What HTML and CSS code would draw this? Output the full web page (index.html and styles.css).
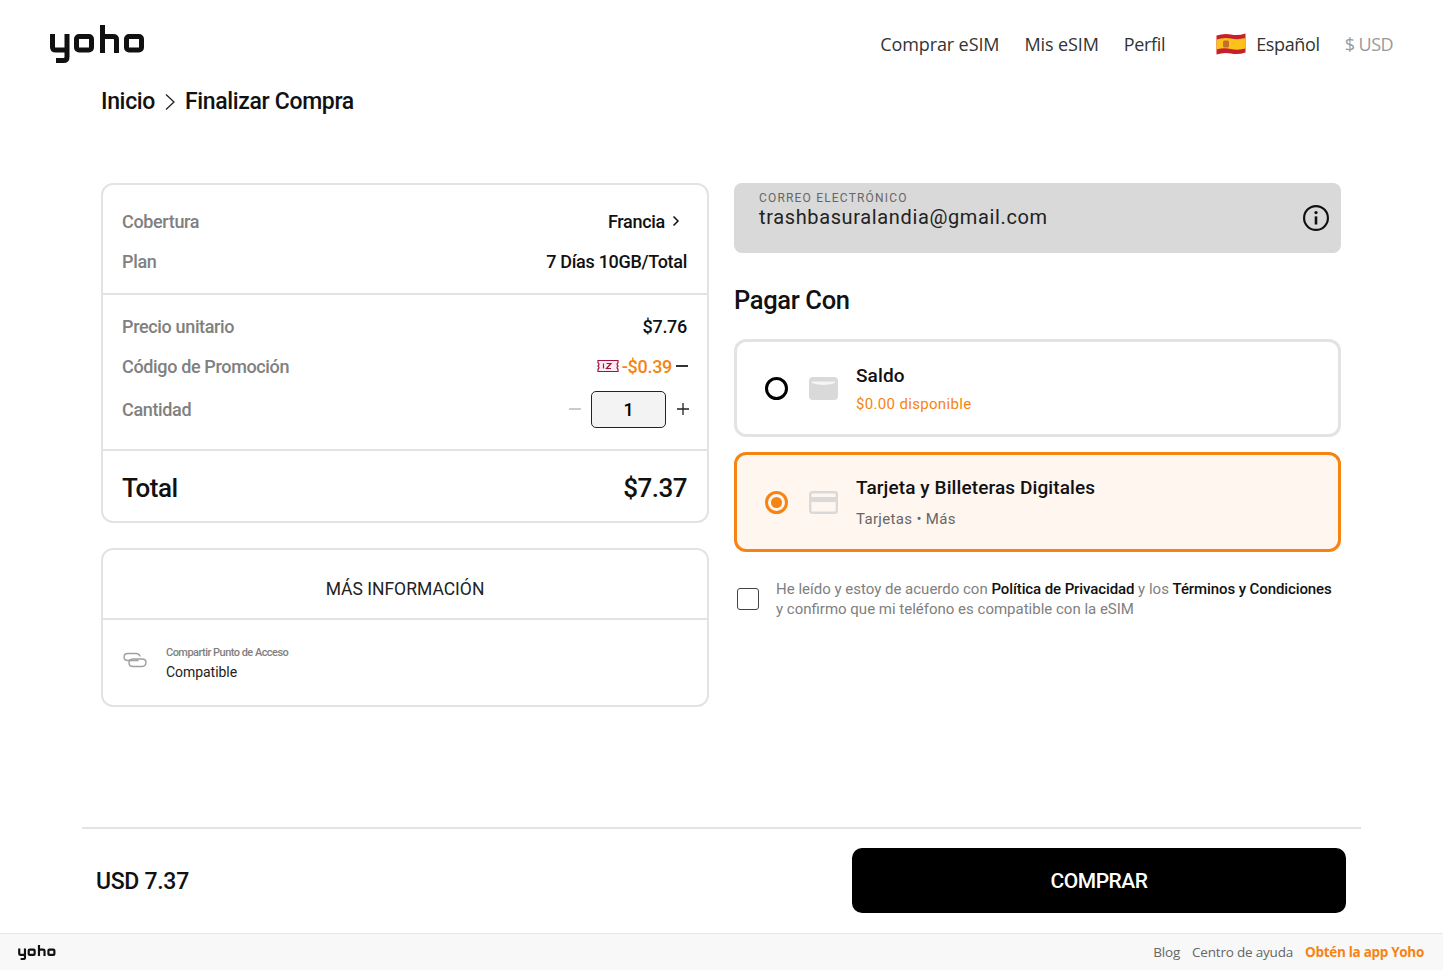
FILE: index.html
```html
<!DOCTYPE html>
<html lang="es">
<head>
<meta charset="utf-8">
<title>Finalizar Compra</title>
<link rel="stylesheet" href="styles.css">
</head>
<body>
<header class="topbar">
  <svg class="logo" viewBox="0 0 95 38" fill="none" stroke="#111" stroke-width="5" stroke-linejoin="round" aria-label="yoho">
    <path d="M2.5 9V22Q2.5 25 6 25H17M17 9V32Q17 35.5 13.5 35.5H6"/>
    <rect x="26.5" y="11.5" width="15" height="13.5" rx="2.5"/>
    <path d="M52.5 0V28M52.5 11.5H63Q66.5 11.5 66.5 14.5V28"/>
    <rect x="76.5" y="11.5" width="15" height="13.5" rx="2.5"/>
  </svg>
  <nav class="nav">
    <a class="nav-link wide">Comprar eSIM</a>
    <a class="nav-link wide">Mis eSIM</a>
    <a class="nav-link">Perfil</a>
    <svg class="flag" viewBox="0 0 30 22">
      <path d="M0.5 2.5Q8 0 15 1.5T29.5 0.5V19.5Q22 22 15 20.5T0.5 21.5Z" fill="#c8202a"/>
      <path d="M0.5 6.5Q8 4 15 5.5T29.5 5V15.5Q22 17.5 15 16T0.5 16.5Z" fill="#fcc21b"/>
      <rect x="7" y="7.5" width="6" height="7" rx="1.5" fill="#c0702a"/>
    </svg>
    <a class="nav-link lang">Español</a>
    <a class="nav-link currency">$ USD</a>
  </nav>
</header>

<div class="crumbs">
  <span>Inicio</span>
  <svg class="crumb-sep" viewBox="0 0 12 18" fill="none" stroke="#222" stroke-width="1.3"><path d="M2 1.5L10 9L2 16.5"/></svg>
  <span>Finalizar Compra</span>
</div>

<main class="columns">
  <section class="col">
    <div class="card">
      <div class="group group-cover">
        <div class="row row-cover">
          <span class="label">Cobertura</span>
          <span class="value">Francia
            <svg class="chev" viewBox="0 0 8 12" fill="none" stroke="#111" stroke-width="1.5"><path d="M1.5 1.5L6 6L1.5 10.5"/></svg>
          </span>
        </div>
        <div class="row row-plan">
          <span class="label">Plan</span>
          <span class="value">7 Días 10GB/Total</span>
        </div>
      </div>
      <div class="group group-price">
        <div class="row row-unit">
          <span class="label">Precio unitario</span>
          <span class="value">$7.76</span>
        </div>
        <div class="row row-promo">
          <span class="label">Código de Promoción</span>
          <span class="promo">
            <svg class="ticket" viewBox="0 0 22 14" fill="#fdeef2" stroke="#a5123f" stroke-width="1.2"><path d="M1 1.5H21V4Q19 5 21 7Q19 9 21 10V12.5H1V10Q3 9 1 7Q3 5 1 4Z"/><path d="M6.5 4.5V9.5M9.5 4.5H14L9.5 9.5H14" fill="none"/></svg>
            <span class="promo-amount">-$0.39</span>
            <span class="dash dash-dark"></span>
          </span>
        </div>
        <div class="row row-qty">
          <span class="label">Cantidad</span>
          <span class="stepper">
            <span class="dash dash-light"></span>
            <span class="qty">1</span>
            <svg class="plus" viewBox="0 0 12 12" stroke="#222" stroke-width="1.3"><path d="M0 6H12M6 0V12"/></svg>
          </span>
        </div>
      </div>
      <div class="total-row">
        <span>Total</span>
        <span>$7.37</span>
      </div>
    </div>

    <div class="card info-card">
      <div class="info-head">MÁS INFORMACIÓN</div>
      <div class="info-body">
        <svg class="link-icon" viewBox="0 0 24 16" fill="none" stroke="#a0a0a0" stroke-width="1.4" stroke-linecap="round"><path d="M17 4Q16 1.5 13 1.5H5Q1 1.5 1 5T5 8.5H15"/><path d="M9 7H19Q23 7 23 10.5T19 14.5H10Q6 14.5 6 11T8 7.5"/></svg>
        <div class="info-text">
          <div class="info-title">Compartir Punto de Acceso</div>
          <div class="info-value">Compatible</div>
        </div>
      </div>
    </div>
  </section>

  <section class="col">
    <div class="email">
      <div class="email-label">CORREO ELECTRÓNICO</div>
      <div class="email-value">trashbasuralandia@gmail.com</div>
      <svg class="info-icon" viewBox="0 0 24 24" fill="none" stroke="#111" stroke-width="2"><circle cx="12" cy="12" r="11"/><path d="M12 10.5V18" stroke-width="2.4"/><circle cx="12" cy="7" r="1.5" fill="#111" stroke="none"/></svg>
    </div>
    <h2 class="pay-title">Pagar Con</h2>
    <div class="option plain">
      <span class="radio"></span>
      <svg class="pay-icon" viewBox="0 0 29 23"><rect width="29" height="23" rx="4" fill="#d9d9d9"/><path d="M3 4.5H26V6Q14.5 10 3 6Z" fill="#f6f6f6"/></svg>
      <div>
        <div class="option-title">Saldo</div>
        <div class="option-sub orange">$0.00 disponible</div>
      </div>
    </div>
    <div class="option selected">
      <span class="radio on"></span>
      <svg class="pay-icon" viewBox="0 0 29 23" fill="none"><rect x="1.2" y="1.2" width="26.6" height="20.6" rx="2" stroke="#d9d9d9" stroke-width="2.4"/><rect x="2" y="6" width="25" height="5" fill="#d9d9d9"/></svg>
      <div>
        <div class="option-title">Tarjeta y Billeteras Digitales</div>
        <div class="option-sub muted">Tarjetas • Más</div>
      </div>
    </div>
    <div class="terms">
      <span class="check"></span>
      <p class="terms-text">He leído y estoy de acuerdo con <b>Política de Privacidad</b> y los <b>Términos y Condiciones</b> y confirmo que mi teléfono es compatible con la eSIM</p>
    </div>
  </section>
</main>

<div class="checkout">
  <div class="checkout-price">USD 7.37</div>
  <button class="buy">COMPRAR</button>
</div>

<footer class="footer">
  <svg class="logo-small" viewBox="0 0 95 38" fill="none" stroke="#111" stroke-width="5.5" stroke-linejoin="round" aria-label="yoho">
    <path d="M2.5 9V22Q2.5 25 6 25H17M17 9V32Q17 35.5 13.5 35.5H6"/>
    <rect x="26.5" y="11.5" width="15" height="13.5" rx="2.5"/>
    <path d="M52.5 0V28M52.5 11.5H63Q66.5 11.5 66.5 14.5V28"/>
    <rect x="76.5" y="11.5" width="15" height="13.5" rx="2.5"/>
  </svg>
  <div class="footer-links">
    <a>Blog</a>
    <a>Centro de ayuda</a>
    <a class="app">Obtén la app Yoho</a>
  </div>
</footer>
</body>
</html>
```
FILE: styles.css
```css
* { box-sizing: border-box; }
html, body { margin: 0; height: 970px; overflow: hidden; }
body {
  background: #fff;
  color: #000;
  font-family: Roboto, "Liberation Sans", sans-serif;
  display: flex;
  flex-direction: column;
}
.topbar {
  height: 88px;
  padding: 25px 50px 0;
  display: flex;
  justify-content: space-between;
  align-items: flex-start;
  flex: none;
}
.logo { width: 95px; height: 38px; display: block; }
.nav {
  display: flex;
  align-items: center;
  height: 38px;
  font-family: "Open Sans", sans-serif;
  font-size: 18px;
  color: #333;
}
.nav-link { margin-left: 25px; letter-spacing: -0.35px; }
.nav-link.wide { letter-spacing: -0.1px; }
.flag { width: 30px; height: 22px; margin-left: 51px; margin-top: -1px; }
.nav-link.lang { margin-left: 10px; }
.nav-link.currency { color: #999; letter-spacing: -0.55px; }
.crumbs {
  margin: 0 0 0 101px;
  height: 27px;
  display: flex;
  align-items: center;
  gap: 9px;
  font-size: 23px;
  font-weight: 500;
  color: #111;
  letter-spacing: -0.35px;
  flex: none;
}
.crumb-sep { width: 12px; height: 18px; }
.columns {
  flex: 1;
  margin-top: 68px;
  padding: 0 102px 0 101px;
  display: grid;
  grid-template-columns: 608px 607px;
  gap: 25px;
  align-content: start;
}
.col { min-width: 0; }
.card {
  border: 2px solid #e3e3e3;
  border-radius: 12px;
  background: #fff;
}
.group { border-bottom: 2px solid #e3e3e3; padding: 0 20px 0 19px; }
.group-cover { height: 110px; padding-top: 16px; }
.group-price { height: 156px; padding-top: 11px; }
.row { display: flex; justify-content: space-between; align-items: center; height: 40px; }
.row-qty { height: 46px; }
.label { font-size: 18px; font-weight: 500; color: #808080; letter-spacing: -0.35px; }
.value { font-size: 18px; font-weight: 500; color: #111; letter-spacing: -0.3px; display: flex; align-items: center; }
.chev { width: 8px; height: 12px; margin-left: 7px; margin-right: 7px; }
.promo { display: flex; align-items: center; }
.ticket { width: 22px; height: 14px; margin-right: 3px; }
.promo-amount { color: #f58413; font-size: 18px; font-weight: 500; letter-spacing: -0.3px; }
.dash { display: block; width: 12px; height: 1.5px; }
.dash-dark { background: #333; margin-left: 4px; margin-right: -1px; }
.dash-light { background: #ccc; margin-right: 10px; }
.stepper { display: flex; align-items: center; }
.qty {
  width: 75px;
  height: 37px;
  border: 1.5px solid #222;
  border-radius: 5px;
  background: #f3f3f3;
  display: flex;
  align-items: center;
  justify-content: center;
  font-size: 18px;
  font-weight: 500;
}
.plus { width: 12px; height: 12px; margin-left: 11px; margin-right: -2px; }
.total-row {
  height: 70px;
  padding: 4px 20px 0 19px;
  display: flex;
  justify-content: space-between;
  align-items: center;
  font-size: 26px;
  font-weight: 500;
  color: #111;
  letter-spacing: -0.5px;
}
.info-card { margin-top: 25px; height: 159px; }
.info-head {
  height: 70px;
  border-bottom: 2px solid #e3e3e3;
  display: flex;
  align-items: center;
  justify-content: center;
  padding-top: 10px;
  font-size: 17.5px;
  color: #222;
}
.info-body {
  display: flex;
  align-items: center;
  height: 84px;
  padding-left: 20px;
}
.link-icon { width: 24px; height: 16px; margin-right: 19px; margin-top: -4px; }
.info-text { align-self: flex-start; margin-top: 26px; }
.info-title { font-size: 11px; font-weight: 500; color: #808080; letter-spacing: -0.53px; line-height: 14px; }
.info-value { font-size: 14px; color: #222; line-height: 20px; margin-top: 2px; letter-spacing: -0.05px; }
.email {
  position: relative;
  height: 70px;
  background: #d9d9d9;
  border-radius: 8px;
  padding: 8px 25px 0;
}
.email-label { font-size: 12px; color: #666; letter-spacing: 1.18px; line-height: 14px; }
.email-value { font-size: 20px; color: #222; letter-spacing: 0.63px; line-height: 24px; }
.info-icon { position: absolute; right: 12px; top: 22px; width: 26px; height: 26px; }
.pay-title {
  margin: 31px 0 22px;
  font-size: 25.5px;
  line-height: 33px;
  font-weight: 500;
  color: #111;
  letter-spacing: -0.35px;
}
.option {
  height: 98px;
  border: 3px solid #e3e3e3;
  border-radius: 12px;
  padding-left: 28px;
  display: flex;
  align-items: center;
  margin-bottom: 15px;
}
.option.plain { padding-top: 2px; }
.option.plain .radio { margin-top: -2px; }
.option.plain .pay-icon { margin-top: -2px; }
.option.selected { height: 100px; border-color: #f58413; background: #fff6f0; margin-bottom: 0; }
.radio {
  width: 23px;
  height: 23px;
  border: 3px solid #000;
  border-radius: 50%;
  flex: none;
  display: flex;
  align-items: center;
  justify-content: center;
}
.radio.on { border-color: #f58413; }
.radio.on::after { content: ""; width: 11px; height: 11px; border-radius: 50%; background: #f58413; }
.pay-icon { width: 29px; height: 23px; margin-left: 21px; margin-right: 18px; flex: none; }
.option-title { font-size: 19px; font-weight: 500; color: #111; line-height: 24px; letter-spacing: 0.1px; }
.option-sub { font-size: 15px; line-height: 20px; letter-spacing: 0.33px; margin-top: 6px; }
.selected .option-sub { margin-top: 9px; }
.orange { color: #f58413; }
.muted { color: #666; }
.terms { display: flex; margin-top: 27px; }
.check {
  width: 22px;
  height: 22px;
  border: 1.5px solid #444;
  border-radius: 3px;
  margin: 9px 17px 0 3px;
  flex: none;
}
.terms-text { margin: 0; padding-right: 6px; font-size: 15px; line-height: 20px; color: #808080; }
.terms-text b { font-weight: 500; color: #111; letter-spacing: -0.1px; }
.checkout {
  margin: 0 82px;
  height: 106px;
  border-top: 2px solid #e3e3e3;
  padding: 19px 15px 0 14px;
  display: flex;
  justify-content: space-between;
  flex: none;
}
.checkout-price { font-size: 23px; font-weight: 500; line-height: 68px; color: #111; letter-spacing: -0.3px; }
.buy {
  width: 494px;
  height: 65px;
  background: #000;
  color: #fff;
  border: 0;
  border-radius: 10px;
  font-family: inherit;
  font-size: 21px;
  font-weight: 500;
  letter-spacing: -0.5px;
  padding: 0;
}
.footer {
  height: 37px;
  flex: none;
  background: #f8f8f8;
  border-top: 1px solid #e6e6e6;
  padding: 0 19px 0 18px;
  display: flex;
  align-items: center;
  justify-content: space-between;
}
.logo-small { width: 38px; height: 15px; display: block; }
.footer-links {
  display: flex;
  gap: 12px;
  margin-top: -1px;
  font-family: "Open Sans", sans-serif;
  font-size: 13.5px;
  color: #666;
  letter-spacing: -0.2px;
}
.footer-links .app { color: #f58413; font-weight: 700; letter-spacing: -0.3px; }
```
